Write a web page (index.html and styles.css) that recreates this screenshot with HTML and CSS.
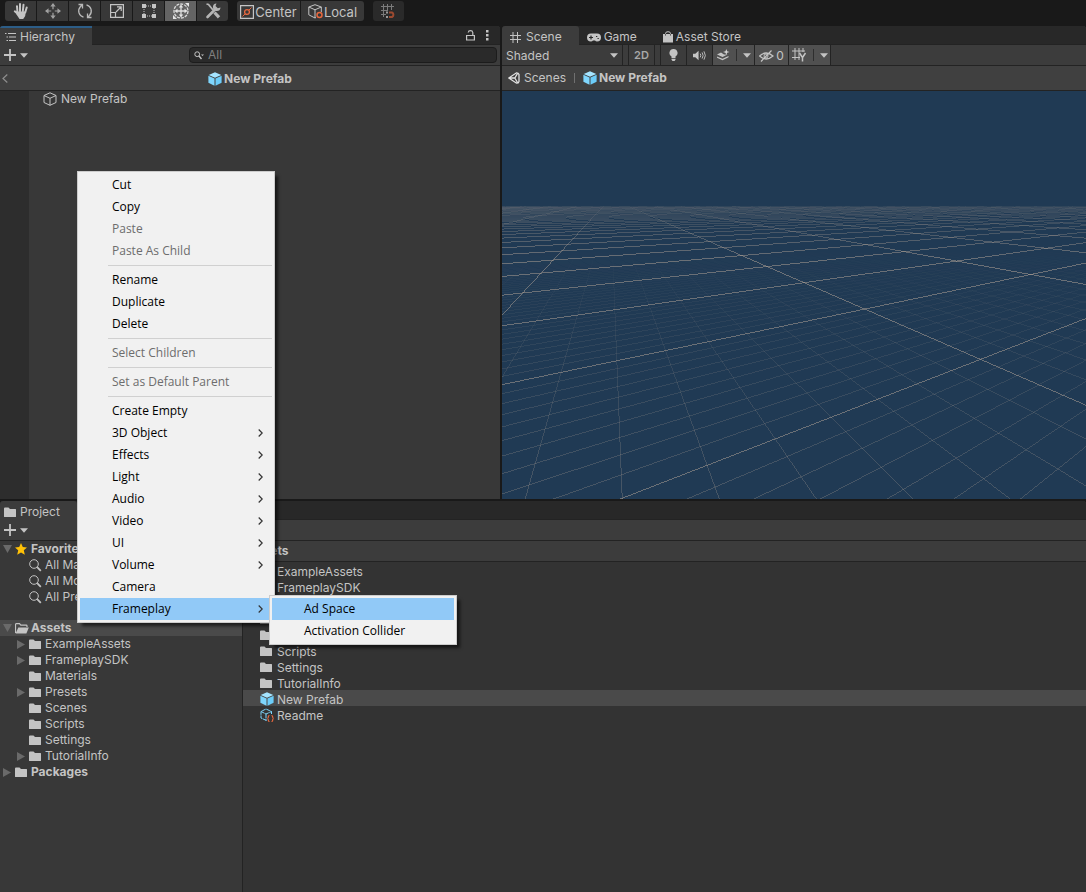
FILE: index.html
```html
<!DOCTYPE html>
<html lang="en">
<head>
<meta charset="utf-8">
<meta name="viewport" content="width=device-width, initial-scale=1">
<title>New Prefab</title>
<link rel="stylesheet" href="styles.css">
</head>
<body>
<svg class="defs" aria-hidden="true">
  <symbol id="cube" viewBox="0 0 14 14"><path d="M7 .3 13.300 3 7 5.800.7 3z" fill="#a5e4ff"/><path d="M.4 3.800 6.500 6.500v7.300L.4 10.800z" fill="#7fd6fd"/><path d="M13.600 3.800 7.500 6.500v7.300l6.100-3z" fill="#6cccf8"/></symbol>
  <symbol id="cube-line" viewBox="0 0 14 14"><path d="M7 .8 13 3.500v7L7 13.300l-6-2.800v-7zM1 3.500l6 2.800 6-2.800M7 6.300v7" fill="none" stroke="currentColor" stroke-linejoin="round"/></symbol>
  <symbol id="folder" viewBox="0 0 13 11"><path d="M0 1.500Q0 .5 1 .5h3.500l1.500 1.600H11.500q.5 0 .5.600v6.800q0 .5-.5.500H.6Q0 10 0 9.500z" fill="currentColor"/></symbol>
  <symbol id="folder-open" viewBox="0 0 14 11"><path d="M.5 10V1.500q0-.8.8-.8h3.200l1.300 1.500h5.400q.8 0 .8.800v1" fill="none" stroke="currentColor" stroke-width="1.200"/><path d="M3.300 4.500h10.500L11.400 10.500H.6z" fill="currentColor"/></symbol>
  <symbol id="lens" viewBox="0 0 13 13"><circle cx="5" cy="5" r="4.300" fill="none" stroke="currentColor"/><path d="m8.200 8.200 3.600 3.600" stroke="currentColor" stroke-width="1.800"/></symbol>
  <symbol id="down" viewBox="0 0 8 5"><path d="M0 .3h8L4 4.700z" fill="currentColor"/></symbol>
  <symbol id="plus" viewBox="0 0 12 12"><path d="M6 0v12M0 6h12" stroke="currentColor" stroke-width="1.800"/></symbol>
  <symbol id="fold-open" viewBox="0 0 9 8"><path d="M0 0h9L4.500 8z" fill="currentColor"/></symbol>
  <symbol id="fold-shut" viewBox="0 0 8 9"><path d="M0 0v9l8-4.500z" fill="currentColor"/></symbol>
  <symbol id="next" viewBox="0 0 5 8"><path d="M.7.500 4.200 4 .7 7.500" fill="none" stroke="#333" stroke-width="1.200"/></symbol>
</svg>

<header class="toolbar">
  <div class="group">
    <button class="tool" aria-label="Hand"><svg width="16" height="18" viewBox="0 0 16 18"><path d="M4.500 11 4 4.200M7 9.500V2M9.800 9.500l.7-6.700M12.200 10.500l1.500-5M5.500 12.500 1.800 9.300" stroke="#c4c4c4" stroke-width="2" stroke-linecap="round"/><path d="M3.500 9.500h9.300l-.6 4.500-2 3H6.500l-3-4.500z" fill="#c4c4c4"/></svg></button>
    <button class="tool" aria-label="Move"><svg width="16" height="16" viewBox="0 0 18 18"><path d="M9 2v5M9 11v5M2 9h5m4 0h5" stroke="#a0a0a0" stroke-width="1.400"/><path d="M9 0 6 4h6zM9 18l-3-4h6zM0 9l4-3v6zM18 9l-4-3v6z" fill="#a0a0a0"/></svg></button>
    <button class="tool" aria-label="Rotate"><svg width="16" height="16" viewBox="0 0 16 16" fill="none" stroke="#b8b8b8" stroke-width="1.300"><path d="M6.500 14.200C2 13 0 7.500 3.500 3.500L5 2M9.500 1.800C14 3 16 8.500 12.500 12.500L11 14M1.500 1.500h4v4M14.500 14.500h-4v-4"/></svg></button>
    <button class="tool" aria-label="Scale"><svg width="14" height="14" viewBox="0 0 14 14" fill="none" stroke="#c4c4c4" stroke-width="1.200"><path d="M.6.600h12.800v12.800H.6zM.6 8.500h4.900v4.900M6 8l5-5M7 2.800h4.200V7"/></svg></button>
    <button class="tool" aria-label="Rect"><svg width="14" height="14" viewBox="0 0 14 14"><path d="M2 2h10v10H2z" fill="none" stroke="#c4c4c4" stroke-dasharray="1 1"/><path d="M0 0h4v4H0zM10 0h4v4h-4zM0 10h4v4H0zM10 10h4v4h-4z" fill="#c4c4c4"/></svg></button>
    <button class="tool active" aria-label="Transform" aria-pressed="true"><svg width="18" height="18" viewBox="0 0 18 18"><circle cx="9" cy="9" r="7" fill="none" stroke="#d8d8d8" stroke-width="1.300" stroke-dasharray="3 1"/><path d="M9 4v10M4 9h10" stroke="#e0e0e0" stroke-width="1.300"/><path d="M9 2.500 6.800 5.500h4.400zM9 15.500l-2.200-3h4.400zM2.500 9l3-2.200v4.400zM15.500 9l-3-2.200v4.400zM13 1h4v4zM1 13v4h4z" fill="#e4e4e4"/></svg></button>
    <button class="tool" aria-label="Custom tools"><svg width="16" height="16" viewBox="0 0 16 16"><path d="m2.500 14 7-7" stroke="#b4b4b4" stroke-width="2.600" stroke-linecap="round"/><path d="M15.500 4.500a3.800 3.800 0 1 1-4-4L10.500 3l2.300 2.300z" fill="#b4b4b4"/><path d="M1.500 1 3.500 1.500 8 7" fill="none" stroke="#b4b4b4" stroke-width="1.800"/><path d="m9.500 9.500 4.500 4.800" stroke="#b4b4b4" stroke-width="3.200"/></svg></button>
  </div>
  <div class="group">
    <button class="tool wide"><svg width="14" height="14" viewBox="0 0 14 14" fill="none"><path d="M.6.600h12.800v12.800H.6z" stroke="#c4c4c4" stroke-width="1.200"/><circle cx="7" cy="7" r="2.400" stroke="#e8683f" stroke-width="1.300"/><path d="m2.500 11.500 2.500-2.500M9 5l2.500-2.500" stroke="#e8683f"/></svg>Center</button>
    <button class="tool wide"><svg width="15" height="15" viewBox="0 0 15 15" fill="none"><path d="M7 .7 13.300 3v5M8 13.500 7 14 .8 10.800V3L7 .7M.8 3 7 5.800 13.300 3M7 5.800V14" stroke="#c4c4c4"/><circle cx="11.500" cy="11" r="2.500" stroke="#e8683f" stroke-width="1.500"/></svg>Local</button>
  </div>
  <button class="tool snap" aria-label="Grid snapping"><svg width="15" height="15" viewBox="0 0 15 15" fill="none"><path d="M2.500 0v13M6.500 0v7M10.500 0v6M0 2.500h13M0 6.500h6M0 10.500h5" stroke="#7b7b7b"/><path d="M8 8.500h3a2.500 2.500 0 0 1 0 4.500H8" stroke="#9c4a30" stroke-width="2"/><path d="M5 7.500h2v2H5zM5 12h2v2H5z" fill="#999"/></svg></button>
</header>

<main class="workspace">
  <section class="pane hierarchy" aria-label="Hierarchy">
    <div class="tabs">
      <button class="tab focus"><svg width="11" height="10" viewBox="0 0 11 10" stroke="#c4c4c4"><path d="M3 1.500h8M4 5h7M4 8.500h7M0 1.500h1.500M1.500 5H3M1.500 8.500H3"/></svg>Hierarchy</button>
      <span class="tab-tools">
        <button aria-label="Lock"><svg width="9" height="11" viewBox="0 0 9 11" fill="none" stroke="#c4c4c4" stroke-width="1.200"><path d="M.6 5.500h7.800v4.500H.6zM6.800 5.500v-3Q6.500.700 4.500.700 2.500.700 2.200 2.500"/></svg></button>
        <button aria-label="More"><svg width="3" height="11" viewBox="0 0 3 11" fill="#c4c4c4"><path d="M0 0h2.500v2.500H0zM0 4h2.500v2.500H0zM0 8h2.500v2.500H0z"/></svg></button>
      </span>
    </div>
    <div class="bar search-bar">
      <button class="add" aria-label="Create"><svg width="12" height="12"><use href="#plus"/></svg><svg width="8" height="5"><use href="#down"/></svg></button>
      <label class="search"><svg width="10" height="9" viewBox="0 0 10 9" fill="none" stroke="#c4c4c4"><circle cx="3.200" cy="3.200" r="2.400"/><path d="m5 5 2.500 3" stroke-width="1.400"/><path d="M7 3.500h3L8.500 5z" fill="#c4c4c4" stroke="none"/></svg><input type="text" placeholder="All" aria-label="Search hierarchy"></label>
    </div>
    <div class="crumb prefab-head">
      <button class="back" aria-label="Back"><svg width="6" height="9" viewBox="0 0 6 9"><path d="M5.300.500 1 4.500l4.300 4" fill="none" stroke="#8e8e8e" stroke-width="1.200"/></svg></button>
      <b class="title"><svg width="14" height="14"><use href="#cube"/></svg>New Prefab</b>
    </div>
    <div class="tree-area">
      <ul class="scene-tree"><li><svg width="14" height="14"><use href="#cube-line"/></svg>New Prefab</li></ul>
    </div>
  </section>

  <section class="pane scene" aria-label="Scene">
    <div class="tabs">
      <button class="tab current"><svg width="11" height="11" viewBox="0 0 11 11" stroke="#c4c4c4"><path d="M3 0v11M7.500 0v11M0 3.500h11M0 7.500h11"/></svg>Scene</button>
      <button class="tab"><svg width="14" height="9" viewBox="0 0 14 9"><path d="M4 .5h6a4 4 0 0 1 0 8Q8.800 8.500 8 7.500H6Q5.200 8.500 4 8.500a4 4 0 0 1 0-8z" fill="#c4c4c4"/><path d="M4 2.500v4M2 4.500h4M9 3.500h1.300M10.500 5.500h1.300" stroke="#282828" stroke-width="1.200"/></svg>Game</button>
      <button class="tab"><svg width="10" height="12" viewBox="0 0 10 12"><path d="M0 3h10v8.500H0z" fill="#c4c4c4"/><path d="M2.500 5V2.500Q2.500.700 5 .700t2.500 1.800V5" fill="none" stroke="#c4c4c4"/><path d="M2.500 3.200v1.300M7.500 3.200v1.300" stroke="#444"/></svg>Asset Store</button>
    </div>
    <div class="bar scene-bar">
      <span class="shading"><select aria-label="Draw mode"><option>Shaded</option></select><svg width="8" height="5"><use href="#down"/></svg></span>
      <button class="mode two-d">2D</button>
      <button class="mode" aria-label="Lighting"><svg width="9" height="12" viewBox="0 0 9 12" fill="#c4c4c4"><path d="M4.500 0A4 4 0 0 0 2.500 7.500V9h4V7.500A4 4 0 0 0 4.500 0zM2.500 9.700h4v1L5.500 12h-2l-1-1.300z"/></svg></button>
      <button class="mode" aria-label="Audio"><svg width="13" height="11" viewBox="0 0 14 11"><path d="M0 3.500h2.500L6 .5v10l-3.500-3H0z" fill="#c4c4c4"/><path d="M7.800 3.500q1.200 2 0 4M9.800 2.200q2.200 3.300 0 6.600M11.800 1q3 4.500 0 9" fill="none" stroke="#c4c4c4"/></svg></button>
      <button class="mode on split" aria-label="Effects"><svg width="13" height="12" viewBox="0 0 13 12"><path d="M0 5.500 4 3.500l3 2h3.500L5.500 8zM0 7.500l5.500 2.200L11.500 7v1.300l-6 3L0 8.800z" fill="#c4c4c4"/><path d="m9.300 0 .8 2.200 2.400.8-2.400.8-.8 2.200-.8-2.200L6 3l2.500-.8z" fill="#d4d4d4"/></svg><i></i><svg width="8" height="5"><use href="#down"/></svg></button>
      <button class="mode on hidden" aria-label="Hidden objects 0"><svg width="15" height="12" viewBox="0 0 15 12" fill="none" stroke="#c4c4c4"><path d="M.6 6Q7 0 14 6 7 12 .6 6zM2 11.500 12.500.5" stroke-width="1.200"/><circle cx="7" cy="6" r="2"/></svg>0</button>
      <button class="mode on split" aria-label="Grid axis Y"><svg width="15" height="14" viewBox="0 0 15 14" fill="none" stroke="#c4c4c4"><path d="M3 0v12M7 0v12M11 0v4M0 3h13M0 9.500h8"/><path d="m7.500 5 3 4.500v4M13.500 5l-3 4.500" stroke-width="1.500"/></svg><i></i><svg width="8" height="5"><use href="#down"/></svg></button>
    </div>
    <nav class="crumb scene-crumb">
      <a href="#"><svg width="12" height="12" viewBox="0 0 12 12" fill="none" stroke="#e0e0e0" stroke-width="1.300"><path d="M.8 6 8.500.800Q10.500.800 11 2.500v7q-.5 1.700-2.500 1.700zM.8 6h6L9.500 1.500M6.800 6l2.700 4.500"/></svg>Scenes</a>
      <i class="rule"></i>
      <b class="title"><svg width="14" height="14"><use href="#cube"/></svg>New Prefab</b>
    </nav>
    <div class="viewport"><canvas id="view"></canvas></div>
  </section>

  <section class="pane project" aria-label="Project">
    <div class="tabs"><button class="tab current"><svg width="13" height="11"><use href="#folder"/></svg>Project</button></div>
    <div class="bar"><button class="add" aria-label="Create"><svg width="12" height="12"><use href="#plus"/></svg><svg width="8" height="5"><use href="#down"/></svg></button></div>
    <div class="columns">
      <div class="side">
        <ul class="tree">
          <li class="root"><svg class="fold" width="9" height="8"><use href="#fold-open"/></svg><svg class="pic" width="12" height="12" viewBox="0 0 12 12"><path d="m6 0 1.800 4 4.200.4-3.200 2.900 1 4.500L6 9.400l-3.800 2.400 1-4.500L0 4.400 4.200 4z" fill="#ffc107"/></svg>Favorites</li>
          <li class="child"><svg class="pic" width="13" height="13"><use href="#lens"/></svg>All Materials</li>
          <li class="child"><svg class="pic" width="13" height="13"><use href="#lens"/></svg>All Models</li>
          <li class="child"><svg class="pic" width="13" height="13"><use href="#lens"/></svg>All Prefabs</li>
        </ul>
        <ul class="tree">
          <li class="root picked"><svg class="fold" width="9" height="8"><use href="#fold-open"/></svg><svg class="pic" width="14" height="11"><use href="#folder-open"/></svg>Assets</li>
          <li class="child"><svg class="fold" width="8" height="9"><use href="#fold-shut"/></svg><svg class="pic" width="13" height="11"><use href="#folder"/></svg>ExampleAssets</li>
          <li class="child"><svg class="fold" width="8" height="9"><use href="#fold-shut"/></svg><svg class="pic" width="13" height="11"><use href="#folder"/></svg>FrameplaySDK</li>
          <li class="child"><svg class="pic" width="13" height="11"><use href="#folder"/></svg>Materials</li>
          <li class="child"><svg class="fold" width="8" height="9"><use href="#fold-shut"/></svg><svg class="pic" width="13" height="11"><use href="#folder"/></svg>Presets</li>
          <li class="child"><svg class="pic" width="13" height="11"><use href="#folder"/></svg>Scenes</li>
          <li class="child"><svg class="pic" width="13" height="11"><use href="#folder"/></svg>Scripts</li>
          <li class="child"><svg class="pic" width="13" height="11"><use href="#folder"/></svg>Settings</li>
          <li class="child"><svg class="fold" width="8" height="9"><use href="#fold-shut"/></svg><svg class="pic" width="13" height="11"><use href="#folder"/></svg>TutorialInfo</li>
          <li class="root"><svg class="fold" width="8" height="9"><use href="#fold-shut"/></svg><svg class="pic" width="13" height="11"><use href="#folder"/></svg>Packages</li>
        </ul>
      </div>
      <div class="files">
        <b class="path">Assets</b>
        <ul class="list">
          <li><svg width="13" height="11"><use href="#folder"/></svg><span>ExampleAssets</span></li>
          <li><svg width="13" height="11"><use href="#folder"/></svg><span>FrameplaySDK</span></li>
          <li><svg width="13" height="11"><use href="#folder"/></svg><span>Materials</span></li>
          <li><svg width="13" height="11"><use href="#folder"/></svg><span>Presets</span></li>
          <li><svg width="13" height="11"><use href="#folder"/></svg><span>Scenes</span></li>
          <li><svg width="13" height="11"><use href="#folder"/></svg><span>Scripts</span></li>
          <li><svg width="13" height="11"><use href="#folder"/></svg><span>Settings</span></li>
          <li><svg width="13" height="11"><use href="#folder"/></svg><span>TutorialInfo</span></li>
          <li class="picked"><svg width="14" height="14"><use href="#cube"/></svg><span>New Prefab</span></li>
          <li><svg width="14" height="14" viewBox="0 0 14 14" fill="none"><path d="M6.500 12.500 1 10V3.500L6 1l5.500 2.500V6M1 3.500 6 6l5.500-2.500M6 6v6.500" stroke="#7fd6fd" stroke-dasharray="4 .6"/><path d="M9.500 7.500q-1.200 0-1.200 1.500T7.300 10.500q1 0 1 1.500t1.200 1.500M11.500 7.500q1.200 0 1.200 1.500t1 1.500q-1 0-1 1.500t-1.200 1.500" stroke="#e8683f" stroke-width="1.200"/></svg><span>Readme</span></li>
        </ul>
      </div>
    </div>
  </section>
</main>

<div class="menu context" role="menu">
  <button role="menuitem">Cut</button>
  <button role="menuitem">Copy</button>
  <button role="menuitem" disabled>Paste</button>
  <button role="menuitem" disabled>Paste As Child</button>
  <hr>
  <button role="menuitem">Rename</button>
  <button role="menuitem">Duplicate</button>
  <button role="menuitem">Delete</button>
  <hr>
  <button role="menuitem" disabled>Select Children</button>
  <hr>
  <button role="menuitem" disabled>Set as Default Parent</button>
  <hr>
  <button role="menuitem">Create Empty</button>
  <button role="menuitem">3D Object<svg width="5" height="8"><use href="#next"/></svg></button>
  <button role="menuitem">Effects<svg width="5" height="8"><use href="#next"/></svg></button>
  <button role="menuitem">Light<svg width="5" height="8"><use href="#next"/></svg></button>
  <button role="menuitem">Audio<svg width="5" height="8"><use href="#next"/></svg></button>
  <button role="menuitem">Video<svg width="5" height="8"><use href="#next"/></svg></button>
  <button role="menuitem">UI<svg width="5" height="8"><use href="#next"/></svg></button>
  <button role="menuitem">Volume<svg width="5" height="8"><use href="#next"/></svg></button>
  <button role="menuitem">Camera</button>
  <button role="menuitem" class="hot">Frameplay<svg width="5" height="8"><use href="#next"/></svg></button>
</div>
<div class="menu submenu" role="menu" aria-label="Frameplay">
  <button role="menuitem" class="hot">Ad Space</button>
  <button role="menuitem">Activation Collider</button>
</div>
<script src="grid.js"></script>
</body>
</html>
```

FILE: styles.css
```css
* { box-sizing: border-box; }
body {
  margin: 0;
  min-height: 100vh;
  display: flex;
  flex-direction: column;
  background: #191919;
  color: #c4c4c4;
  font: 12px/16px Inter, "Liberation Sans", sans-serif;
}
button, input, select {
  margin: 0;
  padding: 0;
  border: 0;
  background: none;
  color: inherit;
  font: inherit;
}
svg { display: block; flex: none; }
ul { list-style: none; margin: 0; padding: 0; }
a { color: inherit; text-decoration: none; }
b { font-weight: 600; }
.defs { position: absolute; width: 0; height: 0; }

.toolbar { display: flex; gap: 9px; height: 26px; padding: 1px 5px 5px; }
.group { display: flex; gap: 1px; border-radius: 3px; overflow: hidden; }
.tool { display: flex; align-items: center; justify-content: center; width: 31px; height: 20px; background: #383838; }
.tool.active { background: #646464; }
.tool.wide { width: 63px; gap: 1px; padding-top: 1px; font-size: 13px; }
.tool.snap { border-radius: 3px; background: #2a2a2a; }

.workspace {
  flex: 1;
  display: grid;
  grid-template-columns: minmax(0, 500fr) minmax(0, 584fr);
  grid-template-rows: minmax(0, 473fr) minmax(0, 391fr);
  gap: 2px;
}
.pane { display: flex; flex-direction: column; min-height: 0; background: #383838; border-radius: 3px 3px 0 0; overflow: hidden; }
.project { grid-column: 1 / -1; }

.tabs { display: flex; height: 19px; background: #282828; border-bottom: 1px solid #232323; }
.tab { display: flex; align-items: center; gap: 5px; height: 20px; padding: 2px 9px 0 8px; border-radius: 3px 3px 0 0; }
.tab.current { background: #3c3c3c; }
.tab.focus { background: #3c3c3c; border-top: 2px solid #2c5d87; padding: 0 17px 0 5px; border-radius: 0; gap: 4px; }
.tab-tools { display: flex; align-items: center; gap: 11px; margin-left: auto; padding-right: 11px; }
.scene .tab { padding-right: 17px; }
.scene .tab + .tab { gap: 3px; padding: 2px 18px 0 8px; }
.project .tab { gap: 3px; padding: 2px 17px 0 4px; }

.bar { display: flex; align-items: center; height: 21px; background: #3c3c3c; border-bottom: 1px solid #232323; }
.add { display: flex; align-items: center; gap: 4px; padding-left: 4px; }
.search { display: flex; align-items: center; gap: 4px; width: 308px; height: 16px; margin: 0 3px 0 auto; padding: 0 4px; border: 1px solid #1c1c1c; border-radius: 4px; background: #2a2a2a; }
.search input { flex: 1; min-width: 0; outline: 0; line-height: 14px; }
.search input::placeholder { color: #808080; opacity: 1; }

.crumb { display: flex; align-items: center; height: 25px; padding-top: 1px; background: #404040; border-bottom: 1px solid #232323; }
.title { display: flex; align-items: center; gap: 2px; font-weight: 700; }
.prefab-head { display: grid; grid-template-columns: 1fr auto 1fr; }
.back { justify-self: start; padding-left: 2px; }
.scene-crumb { padding: 0 6px; gap: 8px; }
.scene-crumb a { display: flex; align-items: center; gap: 4px; }
.rule { width: 1px; height: 10px; background: #707070; }

.tree-area { flex: 1; padding-left: 29px; background: linear-gradient(90deg, #2d2d2d 29px, #383838 29px); }
.scene-tree li { display: flex; align-items: center; gap: 4px; height: 16px; padding-left: 14px; }

.scene-bar { align-items: stretch; }
.shading { display: flex; align-items: center; width: 121px; padding-right: 4px; border-right: 1px solid #232323; }
.shading select { flex: 1; padding: 1px 0 0 4px; appearance: none; outline: 0; }
.mode { display: flex; align-items: center; justify-content: center; width: 26px; border-right: 1px solid #232323; }
.two-d { width: 27px; margin: 0 5px; border-left: 1px solid #232323; color: #a8a8a8; font-size: 11px; font-weight: 600; }
.two-d + .mode { width: 27px; border-left: 1px solid #232323; }
.mode.on { background: #505050; }
.mode.split { width: 42px; gap: 6px; }
.mode.split i { width: 1px; height: 12px; background: #2e2e2e; }
.mode.hidden { width: 34px; gap: 2px; padding-top: 1px; }
.viewport { flex: 1; min-height: 0; overflow: hidden; background: #203a54; }
.viewport canvas { display: block; width: 100%; height: 100%; }

.columns { flex: 1; display: flex; min-height: 0; }
.side { width: 243px; border-right: 1px solid #232323; }
.tree + .tree { margin-top: 15px; }
.tree li { display: grid; align-items: center; height: 16px; }
.tree .root { grid-template-columns: 12px 14px 1fr; column-gap: 2px; padding-left: 1px; font-weight: 700; }
.tree .child { grid-template-columns: 12px 14px 1fr; column-gap: 2px; padding-left: 15px; }
.tree .fold { grid-column: 1; color: #6a6a6a; justify-self: center; }
.tree .pic { grid-column: 2; }
.picked { background: #4a4a4a; }
.files { flex: 1; background: #333; }
.path { display: block; height: 21px; padding: 2px 5px; background: #3c3c3c; border-bottom: 1px solid #232323; font-weight: 700; }
.list li { display: grid; grid-template-columns: 14px 1fr; column-gap: 3px; align-items: center; height: 16px; padding-left: 17px; }
.list span { padding-top: 2px; }

.menu {
  position: absolute;
  padding: 2px;
  border: 1px solid #ccc;
  background: #f1f1f1;
  box-shadow: 4px 4px 3px -1px rgba(0, 0, 0, .6);
  color: #000;
  font: 12px/22px "Open Sans", "Noto Sans", sans-serif;
}
.context { left: 77px; top: 171px; width: 198px; }
.submenu { left: 269px; top: 595px; width: 188px; }
.menu button { display: flex; align-items: center; justify-content: space-between; width: 100%; height: 22px; padding: 0 9px 0 32px; }
.menu button:disabled { color: #6d6d6d; }
.menu hr { height: 1px; margin: 3px 0 3px 28px; border: 0; background: #d0d0d0; }
.menu .hot { background: #91c9f7; }
```

FILE: grid.js
```js
// Perspective floor grid. Each family of parallel lines meets at a point on
// the horizon, and its inverse slopes are evenly spaced.
const canvas = document.getElementById('view');
const HORIZON = 107;
const FAR = 115;
const families = [
  { vx: 893, start: -7.02, step: 0.222, from: -520, to: 60 },
  { vx: 108, start: -0.93, step: 0.323, from: -50, to: 210 }
];

function strength(y, major) {
  if (major) return Math.min(0.46, 0.05 + (y - FAR) / 130);
  return Math.max(0, Math.min(0.24, (y - 155) / 1000));
}

function draw() {
  const w = canvas.width = canvas.clientWidth;
  const h = canvas.height = canvas.clientHeight;
  const ctx = canvas.getContext('2d');
  const dot = (x, y, major) => {
    const a = strength(y, major);
    if (a <= 0) return;
    ctx.fillStyle = `rgba(196,176,160,${a})`;
    ctx.fillRect(Math.round(x), Math.round(y), 1, 1);
  };
  for (const f of families) {
    for (let k = f.from; k <= f.to; k++) {
      const inv = f.start + f.step * k;
      const major = k % 10 === 0;
      if (Math.abs(inv) < 1) {
        for (let y = FAR; y < h; y++) dot(f.vx + inv * (y - HORIZON), y, major);
      } else {
        for (let x = 0; x < w; x++) {
          const y = HORIZON + (x - f.vx) / inv;
          if (y >= FAR && y < h) dot(x, y, major);
        }
      }
    }
  }
}

draw();
window.addEventListener('resize', draw);
```
